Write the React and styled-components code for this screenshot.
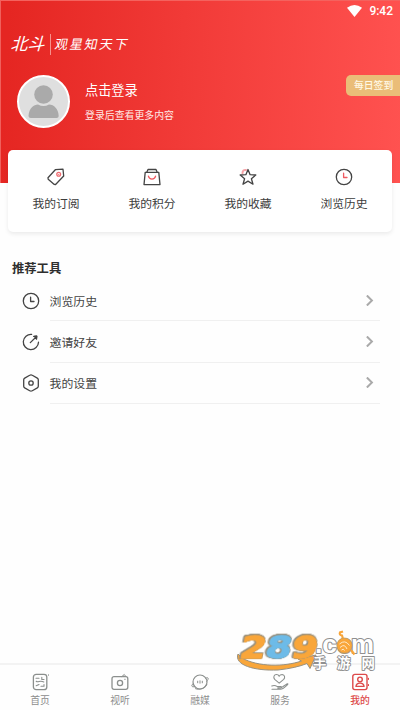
import React from 'react';
import styled, {createGlobalStyle} from 'styled-components';

const Global = createGlobalStyle`
  * { box-sizing: border-box; }
  body {
    margin: 0;
    background: #fefefe;
    font-family: Roboto, "Noto Sans CJK SC", sans-serif;
    color: #333;
  }
`
const Page = styled.div`
  position: relative;
  display: flex;
  flex-direction: column;
  width: 400px;
  height: 710px;
  overflow: hidden;
`
const Header = styled.header`
  flex: none;
  height: 183px;
  background: linear-gradient(93deg, #e52622 2%, #f13a37 45%, #ff5250 100%);
  border-top: 1px solid #f4625e;
  border-left: 1px solid #f0605c;
`
const StatusBar = styled.div`
  display: flex;
  justify-content: flex-end;
  align-items: center;
  gap: 7px;
  height: 20px;
  padding-right: 7px;
  color: #fff;
  font-size: 12px;
  font-weight: 500;
`
const Brand = styled.div`
  display: flex;
  align-items: center;
  height: 28px;
  margin-top: 9px;
  padding-left: 11px;
  color: #fff;
`
const BrandName = styled.span`
  width: 35px;
  font-size: 17px;
  line-height: 22px;
  white-space: nowrap;
  transform: skewX(-16deg);
`
const Bar = styled.i`
  width: 1px;
  height: 21px;
  margin: 0 4px 0 3px;
  background: #f7908c;
`
const Slogan = styled.span`
  padding-top: 1px;
  font-size: 13px;
  line-height: 18px;
  letter-spacing: 1.9px;
  white-space: nowrap;
  transform: skewX(-12deg);
`
const Profile = styled.div`
  display: flex;
  align-items: center;
  height: 54px;
  margin-top: 16px;
  padding-left: 16px;
`
const Avatar = styled.div`
  width: 53px;
  height: 53px;
  border-radius: 50%;
  border: 2px solid #fff;
  background: #dfdfdf;
  overflow: hidden;
`
const Login = styled.div`
  flex: 1;
  margin-left: 15px;
  color: #fff;
`
const LoginTitle = styled.div`
  font-size: 13.2px;
  line-height: 20px;
  margin-top: 2px;
`
const LoginHint = styled.div`
  font-size: 9.9px;
  line-height: 16px;
  margin-top: 7px;
  color: #ffe9e7;
`
const SignIn = styled.div`
  align-self: flex-start;
  width: 54px;
  height: 21px;
  margin-top: 1px;
  padding-left: 8px;
  border-radius: 5px 0 0 5px;
  background: #eabd78;
  color: #fff8e4;
  font-size: 9.8px;
  line-height: 22px;
  font-weight: 500;
  white-space: nowrap;
`
const Card = styled.section`
  flex: none;
  display: grid;
  grid-template-columns: repeat(4, 1fr);
  height: 82px;
  margin: -33px 8px 0;
  border-radius: 5px;
  background: #fff;
  box-shadow: 0 2px 4px rgba(0, 0, 0, 0.08);
`
const CardItem = styled.div`
  display: flex;
  flex-direction: column;
  align-items: center;
  padding-top: 18px;
  font-size: 11.8px;
  line-height: 18px;
  color: #3c3c3c;
  svg { margin-bottom: 9px; }
`
const Heading = styled.h2`
  margin: 28px 0 2px 12px;
  font-size: 12.3px;
  line-height: 18px;
  font-weight: 700;
  color: #2e2e2e;
`
const Row = styled.div`
  display: flex;
  align-items: center;
  height: 41.4px;
  margin: 0 20px 0 22px;
`
const RowBody = styled.div`
  flex: 1;
  display: flex;
  align-items: center;
  justify-content: space-between;
  height: 100%;
  margin-left: 9.5px;
  padding-right: 5px;
  border-bottom: 1px solid #f0f0f0;
  font-size: 11.9px;
  color: #444;
`
const TabBar = styled.nav`
  flex: none;
  display: grid;
  grid-template-columns: repeat(5, 1fr);
  height: 47px;
  margin-top: auto;
  border-top: 2px solid #f3f3f3;
`
const Tab = styled.div`
  display: flex;
  flex-direction: column;
  align-items: center;
  padding-top: 8px;
  font-size: 9.8px;
  line-height: 15px;
  font-weight: ${p => p.$active ? 500 : 400};
  color: ${p => p.$active ? '#dd4a4a' : '#8d8d8d'};
  svg { margin-bottom: 2px; }
`
// floats over the tab bar
const Watermark = styled.svg`
  position: absolute;
  left: 234px;
  top: 630px;
`

const Icon = ({size = 18, box = 18, w = 1.3, color = '#444', children}) => (
  <svg width={size} height={size} viewBox={`0 0 ${box} ${box}`} fill="none" stroke={color}
    strokeWidth={w} strokeLinecap="round" strokeLinejoin="round">{children}</svg>
)

const TagIcon = () => (
  <Icon>
    <path d="M1 9.8 8.3 1.7 16 1.2 16.7 8 8.6 16.5 7 16.3 1.2 11.2Z" />
    <circle cx="11.7" cy="6.3" r="1.9" stroke="#ef6b70" />
    <path d="M11.7 6.3h.01" stroke="#ef6b70" />
  </Icon>
)
const BagIcon = () => (
  <Icon>
    <path d="M2.2 4.4H15.8L17 16.6H1Z" />
    <path d="M3.8 4.2 5 1.5H13L14.2 4.2" />
    <path d="M5.4 8.2C6.4 12 11.6 12 12.6 8.2" stroke="#ef5b62" />
  </Icon>
)
const StarIcon = () => (
  <Icon>
    <path d="M3.5 5.2C3.4 3 5 1.5 7 2" stroke="#f7a4a8" strokeWidth="2" />
    <path d="M9 1.5 11.1 6.7 16.8 7 12.4 10.7 14 16.2 9 13.1 4 16.2 5.6 10.7 1.2 7 6.9 6.7Z" />
  </Icon>
)
const ClockIcon = ({hand}) => (
  <Icon>
    <circle cx="9" cy="9" r="7.7" />
    <path d="M8.6 5.2V9.5H12" stroke={hand} />
  </Icon>
)
const ShareIcon = () => (
  <Icon>
    <path d="M9.6 1.4A7.6 7.6 0 1 0 16.5 9.2M8.3 9.6 14.3 3.7M11.7 3.4 14.7 3.2 14.5 6.2" />
    <path d="M12.5 3.5 14.7 3.2 14.4 5.4Z" fill="#444" />
  </Icon>
)
const SettingsIcon = () => (
  <Icon>
    <path d="M9 .9Q9.7.9 10.3 1.3L15.3 4.1Q16.3 4.7 16.3 5.7V12.3Q16.3 13.3 15.3 13.9L10.3 16.7Q9 17.4 7.7 16.7L2.7 13.9Q1.7 13.3 1.7 12.3V5.7Q1.7 4.7 2.7 4.1L7.7 1.3Q8.3.9 9 .9Z" />
    <circle cx="9" cy="9" r="2.2" />
  </Icon>
)
const Chevron = () => (
  <Icon size={11} box={10} w={1.8} color="#aaa">
    <path d="M2.6 .4 7.2 5 2.6 9.6" strokeLinecap="butt" strokeLinejoin="miter" />
  </Icon>
)

const gray = '#8b8f8d'
const HomeIcon = () => (
  <Icon color={gray} w={1.3}>
    <rect x="2.4" y="1.3" width="13.4" height="15.4" rx="2.8" />
    <path d="M5 5.2H8M5.2 8.3C7.5 10 8.6 6.6 12.8 9M10.8 4.3V6.5H13M5.2 12.8 8 11.5M10 13.2H13V11.5" strokeWidth="1.1" />
    <path d="M17.6 2v.1" />
  </Icon>
)
const VideoIcon = () => (
  <Icon color={gray} w={1.3}>
    <rect x="1" y="3.7" width="15.8" height="12.6" rx="2" />
    <circle cx="9" cy="10" r="2.6" />
    <path d="M11 3.4 13.3 1.5 14.8 3.5M13.7 6.3h.5" strokeWidth="1" />
  </Icon>
)
const MediaIcon = () => (
  <Icon color={gray} w={1.2}>
    <circle cx="9" cy="9" r="7" />
    <path d="M6.7 8.2v1.6M9 7.8v2.4M11.3 8.2v1.6" strokeWidth="1" />
    <path d="M2.2 10.5C-.2 13 .3 14.2 4 13.7M14.8 5C17.8 3.9 18 5.5 15.8 8.4M4.5 15.7C9 17.5 14 15 15.7 11.7" strokeWidth="1" />
  </Icon>
)
const ServiceIcon = () => (
  <Icon color={gray} w={1.1}>
    <path d="M8.2 10.1 3.7 6.4C1.8 4.3 3.2 1.5 5.4 1.5 7 1.5 8 2.8 8.2 3.3 8.7 2.3 9.8 1.5 11.2 1.5 13.7 1.7 14.4 4.6 12.7 6.4Z" />
    <path d="M.8 13C3.4 11.8 5 12.7 6.4 13.6H10.2Q11.7 14.5 9.7 15L6.8 15.1M1 16.3H9.4Q11.8 16.3 16.6 11.6Q17.4 10.5 16 10.9L11.7 13.8" />
  </Icon>
)
const MineIcon = () => (
  <Icon color="#dd4a4a" w={1.4}>
    <rect x="1.8" y="1.4" width="14.2" height="15.2" rx="2" />
    <circle cx="9" cy="6.4" r="2.3" />
    <path d="M5 13.4C5.3 9 12.7 9 13 13.4ZM17.5 5.5v.7M17.5 11.7v.7" />
  </Icon>
)

const WifiIcon = () => (
  <svg width="15" height="12" viewBox="0 0 15 12"><path d="M0 2.7Q7.5-2.5 15 2.7L7.5 12Z" fill="#fff" /></svg>
)

const cards = [
  {title: '我的订阅', icon: <TagIcon />},
  {title: '我的积分', icon: <BagIcon />},
  {title: '我的收藏', icon: <StarIcon />},
  {title: '浏览历史', icon: <ClockIcon hand="#ef5b62" />}
]
const tools = [
  {title: '浏览历史', icon: <ClockIcon />},
  {title: '邀请好友', icon: <ShareIcon />},
  {title: '我的设置', icon: <SettingsIcon />}
]
const tabs = [
  {title: '首页', icon: <HomeIcon />},
  {title: '视听', icon: <VideoIcon />},
  {title: '融媒', icon: <MediaIcon />},
  {title: '服务', icon: <ServiceIcon />},
  {title: '我的', icon: <MineIcon />, active: true}
]

const digits = [
  {n: '2', x: 4.5, color: '#f9a63a'},
  {n: '8', x: 30, color: '#6dbbe8'},
  {n: '9', x: 56, color: '#f9a63a'}
]
// the thin outline comes from four hard shadows, so the stroke can thicken the digit itself
const Digit = styled.text`
  font: 700 31px "DejaVu Sans", sans-serif;
  stroke-width: 1.3px;
  stroke-linejoin: round;
  filter: drop-shadow(0.8px 0 0 #99917f) drop-shadow(-0.8px 0 0 #99917f)
    drop-shadow(0 0.8px 0 #99917f) drop-shadow(0 -0.8px 0 #99917f);
`
const SiteLogo = () => (
  <Watermark width="146" height="44" viewBox="0 0 146 44">
    <path d="M4 24C0 35 20 41 44 40Q62 38 73 33.5L76 38.5 82 25 64 29 67.5 31C50 37 24 37 8 28Z"
      fill="#f9a63a" stroke="#99917f" strokeWidth="1" />
    {digits.map(d => (
      <Digit key={d.n} transform={`matrix(1.2 0 -0.2 1 ${d.x} 28.2)`} fill={d.color} stroke={d.color}>{d.n}</Digit>
    ))}
    <g fontFamily="Liberation Sans, sans-serif" fontWeight="700" fontSize="25" strokeLinejoin="round" paintOrder="stroke"
      fill="#fff" stroke="#8f8f8f" strokeWidth="2">
      <text x="81" y="23" textLength="22" lengthAdjust="spacingAndGlyphs">.c</text>
      <text x="117" y="23" textLength="23" lengthAdjust="spacingAndGlyphs">m</text>
      <text x="103" y="23" fill="#f9a63a" stroke="#a2917a">o</text>
      <g fontSize="13.4" strokeWidth="1.8" fontFamily="Noto Sans CJK SC, sans-serif">
        <text x="79" y="37.8">手</text>
        <text x="103" y="37.8">游</text>
        <text x="127.5" y="37.8">网</text>
      </g>
    </g>
    <path d="M117 20 120.5 24.5M109 9 108 5.5Q105 5 106 2.5L109 1.5" fill="none" stroke="#f9a63a" strokeWidth="2.2" />
    <circle cx="110.5" cy="15.5" r="7.6" fill="#f9a63a" stroke="#b39a6c" strokeWidth=".6" />
    <path d="M105.5 14Q111 9 115.5 15.5M106 17.5Q110.5 13 113 19M107.5 20Q109.5 18 110.5 20.5" fill="none" stroke="#ffe9c8" strokeWidth="1" />
  </Watermark>
)

function App() {
  return (
    <Page>
      <Global />
      <Header>
        <StatusBar><WifiIcon />9:42</StatusBar>
        <Brand>
          <BrandName>北斗</BrandName>
          <Bar />
          <Slogan>观星知天下</Slogan>
        </Brand>
        <Profile>
          <Avatar>
            <svg width="49" height="49" viewBox="0 0 49 49" fill="#aaa">
              <circle cx="24.5" cy="17.5" r="9.3" />
              <path d="M9.5 39C10 31 15 27.5 19 27.5Q24.5 30.5 30 27.5C35 27.5 39.5 32 39.7 39Q39.7 41 37.5 41H11.7Q9.5 41 9.5 39Z" />
            </svg>
          </Avatar>
          <Login>
            <LoginTitle>点击登录</LoginTitle>
            <LoginHint>登录后查看更多内容</LoginHint>
          </Login>
          <SignIn>每日签到</SignIn>
        </Profile>
      </Header>
      <Card>
        {cards.map(c => <CardItem key={c.title}>{c.icon}{c.title}</CardItem>)}
      </Card>
      <Heading>推荐工具</Heading>
      {tools.map(t => (
        <Row key={t.title}>
          {t.icon}
          <RowBody>{t.title}<Chevron /></RowBody>
        </Row>
      ))}
      <TabBar>
        {tabs.map(t => <Tab key={t.title} $active={t.active}>{t.icon}{t.title}</Tab>)}
      </TabBar>
      <SiteLogo />
    </Page>
  );
}

export default App;
